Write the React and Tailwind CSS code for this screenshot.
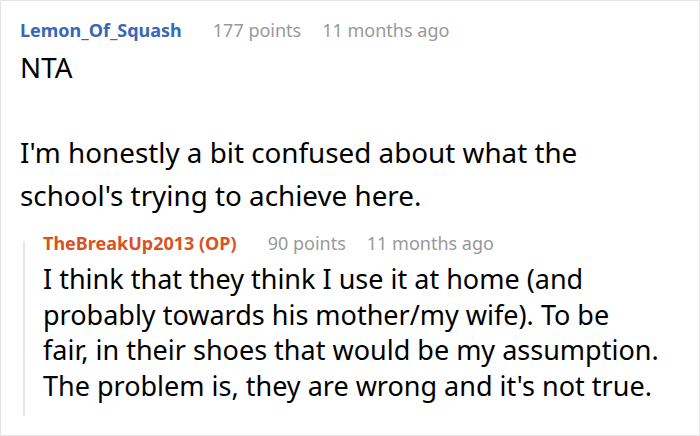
export default function App() {
  return (
    <div className="w-[700px] h-[436px] overflow-hidden bg-white border border-[#e4e4e4] pl-[19px] pr-[15px] pt-[15px] font-['Noto_Sans',sans-serif] text-black">
      <div className="flex items-baseline h-[28px] text-[18px] leading-[28px] whitespace-nowrap">
        <span className="font-bold text-[#3767b6]">Lemon_Of_Squash</span>
        <span className="ml-[31px] text-[#999999]">177 points</span>
        <span className="ml-[21px] text-[#999999]">11 months ago</span>
      </div>
      <div className="mt-[2px] text-[27.8px] leading-[42.5px]">
        <p>NTA</p>
        <p className="mt-[42.5px]">I'm honestly a bit confused about what the school's trying to achieve here.</p>
      </div>
      <div className="mt-[13px] ml-[3px] flex">
        <div className="w-[2px] mt-[12px] shrink-0 bg-[#e8e8e8]" />
        <div className="flex-1 pl-[18px] pb-[13px]">
          <div className="flex items-baseline h-[28px] text-[18px] leading-[28px] whitespace-nowrap">
            <span className="font-bold text-[#d8531f]">TheBreakUp2013 (OP)</span>
            <span className="ml-[31px] text-[#999999]">90 points</span>
            <span className="ml-[21px] text-[#999999]">11 months ago</span>
          </div>
          <p className="mt-[4px] text-[27px] leading-[35.6px] whitespace-nowrap">
            I think that they think I use it at home (and
            <br />
            probably towards his mother/my wife). To be
            <br />
            fair, in their shoes that would be my assumption.
            <br />
            The problem is, they are wrong and it's not true.
          </p>
        </div>
      </div>
    </div>
  );
}
